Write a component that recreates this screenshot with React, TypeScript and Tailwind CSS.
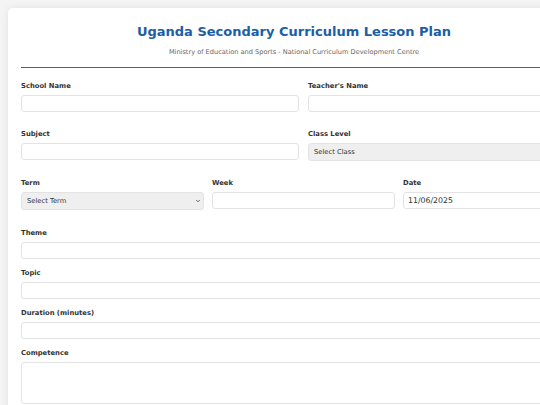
import { ChevronDown } from "lucide-react";

const inputCls =
  "block h-[17.5px] w-full rounded-[3px] border border-[#e3e3e3] bg-white px-[4px] text-[7.8px] text-[#333] outline-none";

function Label({ children }: { children: React.ReactNode }) {
  return (
    <label className="mb-[5px] block text-[6.8px] font-bold leading-[8px] text-[#333]">
      {children}
    </label>
  );
}

function TextField({ label, value }: { label: string; value?: string }) {
  return (
    <div>
      <Label>{label}</Label>
      <input type="text" className={inputCls} defaultValue={value} />
    </div>
  );
}

function SelectField({ label, placeholder }: { label: string; placeholder: string }) {
  return (
    <div>
      <Label>{label}</Label>
      <div className="relative">
        <select className="block h-[18.5px] w-full appearance-none rounded-[3px] border border-[#e3e3e3] bg-[#efefef] px-[5px] text-[6.75px] text-[#333] outline-none">
          <option>{placeholder}</option>
        </select>
        <ChevronDown
          className="pointer-events-none absolute right-[3px] top-1/2 h-[6px] w-[6px] -translate-y-1/2 text-[#333]"
          strokeWidth={3}
        />
      </div>
    </div>
  );
}

export default function App() {
  return (
    <div className="h-screen overflow-hidden bg-[#f4f4f4] p-2 font-['DejaVu_Sans',sans-serif]">
      <div className="w-[572px] rounded-[5px] bg-white px-[13px] pt-[16px] pb-8 shadow-[0_0_8px_rgba(0,0,0,0.08)]">
        <div className="mb-[14px] border-b-[1.5px] border-[#2c6b93] pb-[10px] text-center">
          <h1 className="text-[13px] font-bold leading-[16px] text-[#1a5ea8]">
            Uganda Secondary Curriculum Lesson Plan
          </h1>
          <p className="mt-[7.5px] text-[6.6px] leading-[9px] text-[#666]">
            Ministry of Education and Sports - National Curriculum Development Centre
          </p>
        </div>

        <div className="w-[565px]">
          <div className="mb-[17.5px] grid grid-cols-2 gap-x-[9px]">
            <TextField label="School Name" />
            <TextField label="Teacher's Name" />
          </div>
          <div className="mb-[17.5px] grid grid-cols-2 gap-x-[9px]">
            <TextField label="Subject" />
            <SelectField label="Class Level" placeholder="Select Class" />
          </div>
          <div className="mb-[18.5px] grid grid-cols-3 gap-x-[8px]">
            <SelectField label="Term" placeholder="Select Term" />
            <TextField label="Week" />
            <TextField label="Date" value="11/06/2025" />
          </div>

          <div className="flex flex-col gap-[9.5px]">
            <TextField label="Theme" />
            <TextField label="Topic" />
            <TextField label="Duration (minutes)" />
            <div>
              <Label>Competence</Label>
              <textarea className="block h-[42px] w-full resize-none rounded-[3px] border border-[#e3e3e3] bg-white px-[4px] py-[3px] text-[7.8px] text-[#333] outline-none" />
            </div>
          </div>
        </div>
      </div>
    </div>
  );
}
